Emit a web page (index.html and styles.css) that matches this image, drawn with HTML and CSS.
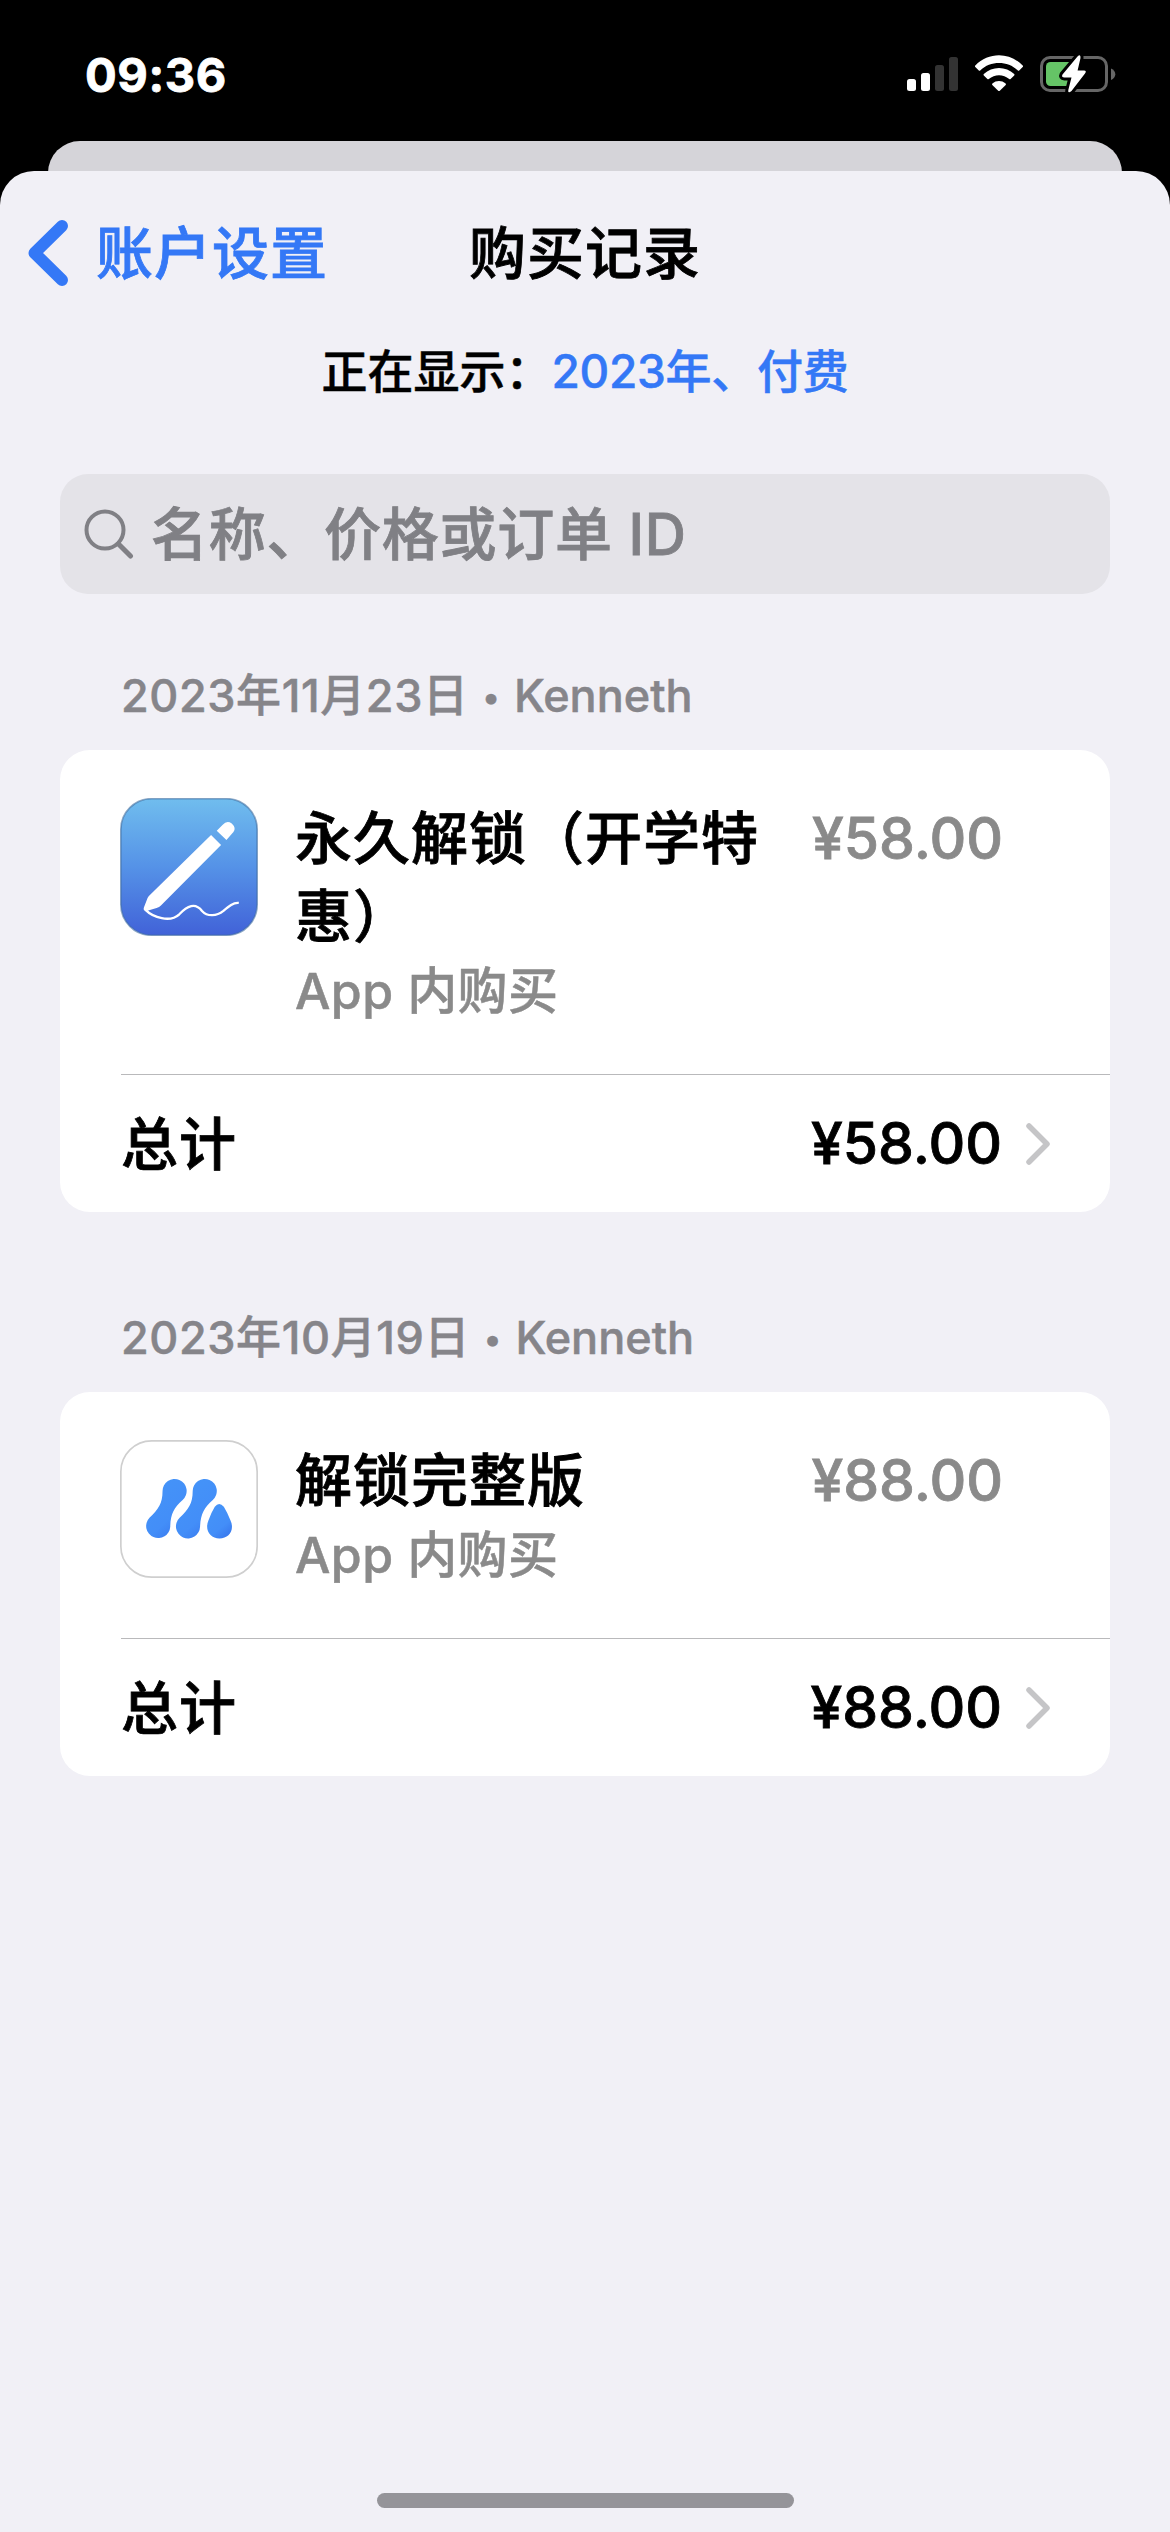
FILE: index.html
```html
<!DOCTYPE html>
<html lang="zh-CN">
<head>
<meta charset="utf-8">
<title>购买记录</title>
<link rel="stylesheet" href="styles.css">
</head>
<body>
<div class="screen">
  <header class="status">
    <span class="clock">09:36</span>
    <svg class="status-icons" viewBox="905 50 212 46">
      <g fill="#fff"><rect x="907" y="79" width="9" height="12" rx="2.5"/><rect x="921" y="73" width="9" height="18" rx="2.5"/></g>
      <g fill="#333"><rect x="935" y="65" width="9" height="26" rx="2.5"/><rect x="949" y="57" width="9" height="34" rx="2.5"/></g>
      <g fill="#fff">
        <path d="M975.3 65.5C988.500 51.900 1009.500 51.900 1022.700 65.500Q1023.400 66.200 1022.700 67L1019.200 70.500Q1018.500 71.100 1017.800 70.400C1007.500 60.600 990.500 60.600 980.200 70.400Q979.500 71.100 978.800 70.500L975.300 67Q974.600 66.200 975.300 65.500Z"/>
        <path d="M983.8 74C992 65.900 1006 65.900 1014.200 74Q1014.900 74.700 1014.200 75.400L1010.600 79Q1009.900 79.600 1009.200 79C1003.500 73.900 994.500 73.900 988.800 79Q988.100 79.600 987.400 79L983.800 75.400Q983.100 74.700 983.800 74Z"/>
        <path d="M992.400 83.500C996.200 80.200 1001.800 80.200 1005.600 83.500Q1006.400 84.200 1005.700 85L999.800 90.700Q999 91.400 998.200 90.700L992.300 85Q991.600 84.200 992.400 83.500Z"/>
      </g>
      <rect x="1041.500" y="57.500" width="65" height="33" rx="8.500" fill="none" stroke="#666" stroke-width="3"/>
      <path d="M1111 68.500Q1115.300 70.500 1115.300 74.200T1111 80Z" fill="#666"/>
      <rect x="1046" y="62" width="29" height="24" rx="4.500" fill="#65c466"/>
      <path d="M1077.500 56.500Q1080.800 53.500 1080.500 58L1077.600 70.500H1084Q1087 70.500 1085 73.500L1071.500 91Q1067.600 94 1068.300 90L1071.500 77.500H1064.500Q1061 77.300 1062.500 74.500Z" fill="#fff" stroke="#000" stroke-width="6" paint-order="stroke"/>
    </svg>
  </header>
  <div class="sheet-back"></div>
  <main class="sheet">
    <nav class="nav">
      <a class="back">
        <svg class="back-arrow" viewBox="0 0 40 66"><path d="M34 6L6.500 33L34 60" fill="none" stroke="#3478f6" stroke-width="12" stroke-linecap="round" stroke-linejoin="round"/></svg>
        <span>账户设置</span>
      </a>
      <h1 class="title">购买记录</h1>
    </nav>
    <p class="filter"><span>正在显示：</span><a class="filter-link">2023年、付费</a></p>
    <div class="search">
      <svg class="glass" viewBox="0 0 50 50"><circle cx="21" cy="21" r="18.500" fill="none" stroke="#808085" stroke-width="4"/><path d="M34.500 35L46.500 47" stroke="#808085" stroke-width="5" stroke-linecap="round"/></svg>
      <span class="placeholder">名称、价格或订单 ID</span>
    </div>

    <section class="group">
      <h2 class="date">2023年11月23日 <span class="dot">•</span> <span class="owner">Kenneth</span></h2>
      <div class="card">
        <div class="item">
          <svg class="app-icon" viewBox="61 54 412 413">
            <defs><linearGradient id="sky" x1="0" y1="0" x2="0" y2="1"><stop offset="0" stop-color="#70bdee"/><stop offset=".5" stop-color="#5592e7"/><stop offset="1" stop-color="#4162d8"/></linearGradient></defs>
            <rect x="63" y="56" width="408" height="409" rx="92" fill="url(#sky)" stroke="#3f6d9e" stroke-opacity=".6" stroke-width="5"/>
            <g fill="#fff">
              <path d="M333 165L363 195L183 376Q178 381 170 383L145 391Q128 394 132 382L143 353Q145 348 150 344Z"/>
              <path d="M350 152L368 134Q380 120 395 130Q409 143 400 156L379 180Z"/>
            </g>
            <path d="M136 388C160 412 210 428 238 402C262 376 286 366 306 392C322 410 350 408 370 392C386 378 400 366 416 368" fill="none" stroke="#fff" stroke-width="7"/>
          </svg>
          <div class="info">
            <h3 class="name">永久解锁（开学特惠）</h3>
            <p class="kind">App 内购买</p>
          </div>
          <span class="price">¥58.00</span>
        </div>
        <div class="total">
          <span class="total-label">总计</span>
          <span class="total-price">¥58.00</span>
          <svg class="chevron" viewBox="0 0 24 42"><path d="M3 3L21 21L3 39" fill="none" stroke="#c5c5c7" stroke-width="5.500" stroke-linecap="round" stroke-linejoin="round"/></svg>
        </div>
      </div>
    </section>

    <section class="group">
      <h2 class="date">2023年10月19日 <span class="dot">•</span> <span class="owner">Kenneth</span></h2>
      <div class="card">
        <div class="item">
          <svg class="app-icon" viewBox="61 61 412 412">
            <defs><linearGradient id="blob" x1="0" y1="0" x2=".6" y2="1"><stop offset="0" stop-color="#4595f8"/><stop offset=".75" stop-color="#438ef8"/><stop offset="1" stop-color="#3b7df0"/></linearGradient></defs>
            <rect x="63.500" y="63.500" width="407" height="407" rx="92" fill="#fff" stroke="#cfcfcf" stroke-width="5"/>
            <g fill="url(#blob)">
              <path d="M188 214A36 36 0 1 1 248 240C222 264 212 280 211 320A36 36 0 1 1 149 293C176 268 188 250 188 214Z"/>
              <path d="M278 214A36 36 0 1 1 338 240C312 264 302 280 300 320A36 36 0 1 1 239 293C266 268 278 250 278 214Z"/>
              <path d="M344 260Q357 244 371 260Q382 278 391 301C404 330 386 355 358 355S313 330 325 301Q333 278 344 260Z"/>
            </g>
          </svg>
          <div class="info">
            <h3 class="name">解锁完整版</h3>
            <p class="kind">App 内购买</p>
          </div>
          <span class="price">¥88.00</span>
        </div>
        <div class="total">
          <span class="total-label">总计</span>
          <span class="total-price">¥88.00</span>
          <svg class="chevron" viewBox="0 0 24 42"><path d="M3 3L21 21L3 39" fill="none" stroke="#c5c5c7" stroke-width="5.500" stroke-linecap="round" stroke-linejoin="round"/></svg>
        </div>
      </div>
    </section>
    <div class="home-bar"></div>
  </main>
</div>
</body>
</html>
```
FILE: styles.css
```css
* { box-sizing: border-box; margin: 0; padding: 0; }
body {
  background: #000;
  font-family: Inter, "Noto Sans CJK SC", sans-serif;
  font-weight: 500;
  color: #000;
  -webkit-text-stroke: .8px currentColor;
}
svg { display: block; flex: none; }
.screen { width: 1170px; height: 2532px; display: flex; flex-direction: column; overflow: hidden; }
.status { height: 141px; display: flex; justify-content: space-between; align-items: flex-start; padding: 50px 53px 0 85px; }
.clock { color: #fff; font-size: 47px; line-height: 49px; font-weight: 700; letter-spacing: .6px; }
.status-icons { width: 212px; height: 46px; }
.sheet-back { height: 60px; margin: 0 48px -30px; border-radius: 32px 32px 0 0; background: #d5d4d9; }
.sheet { flex: 1; background: #f1f0f6; border-radius: 34px 34px 0 0; display: flex; flex-direction: column; }
.nav { display: grid; grid-template-columns: 1fr auto 1fr; align-items: center; height: 82px; margin-top: 41px; padding: 0 28px; }
.back { display: flex; align-items: center; gap: 28px; color: #3478f6; font-size: 57px; letter-spacing: 1px; line-height: 80px; }
.back-arrow { width: 40px; height: 66px; }
.back span, .title { padding-top: 1px; }
.title { font-size: 57px; font-weight: 500; letter-spacing: 1px; line-height: 80px; }
.filter { display: flex; justify-content: center; margin-top: 47px; font-size: 46px; line-height: 60px; -webkit-text-stroke-width: .5px; }
.filter-link { color: #3478f6; letter-spacing: -.3px; }
.search { height: 120px; margin: 73px 60px 0; padding-left: 24px; border-radius: 28px; background: #e4e3e8; display: flex; align-items: center; gap: 17px; color: #808085; }
.glass { width: 50px; height: 50px; }
.placeholder { padding-top: 2px; font-size: 57px; letter-spacing: .7px; line-height: 80px; }
.group { margin: 0 60px; }
.date { height: 60px; margin: 72px 0 0 61px; font-size: 45px; font-weight: 500; line-height: 60px; letter-spacing: .6px; color: #86858a; -webkit-text-stroke-width: .5px; }
.dot { font-size: 33px; line-height: 0; margin: 0 1px; vertical-align: 3px; }
.owner { letter-spacing: 0; }
.card { margin: 24px 0; border-radius: 30px; background: #fff; }
.item { display: flex; align-items: flex-start; margin-left: 61px; padding: 48px 107px 48px 0; border-bottom: 1px solid #b9b9bb; }
.app-icon { width: 138px; height: 138px; margin-left: -1px; }
.info { flex: 1; margin-left: 37px; padding-top: 2px; }
.name { font-size: 57px; font-weight: 500; letter-spacing: 1px; line-height: 78px; }
.kind { font-size: 50px; line-height: 70px; letter-spacing: .4px; color: #8a8a8a; -webkit-text-stroke-width: .5px; }
.price { padding-top: 2px; font-size: 57px; line-height: 78px; color: #8a8a8a; }
.total { display: flex; align-items: center; height: 137px; padding: 0 60px 0 61px; }
.total-label { flex: 1; padding-bottom: 8px; font-size: 57px; letter-spacing: 1px; }
.total-price { font-size: 57px; }
.chevron { width: 24px; height: 42px; margin-left: 24px; }
.home-bar { width: 417px; height: 15px; margin: auto auto 24px; border-radius: 8px; background: #959499; }
```
